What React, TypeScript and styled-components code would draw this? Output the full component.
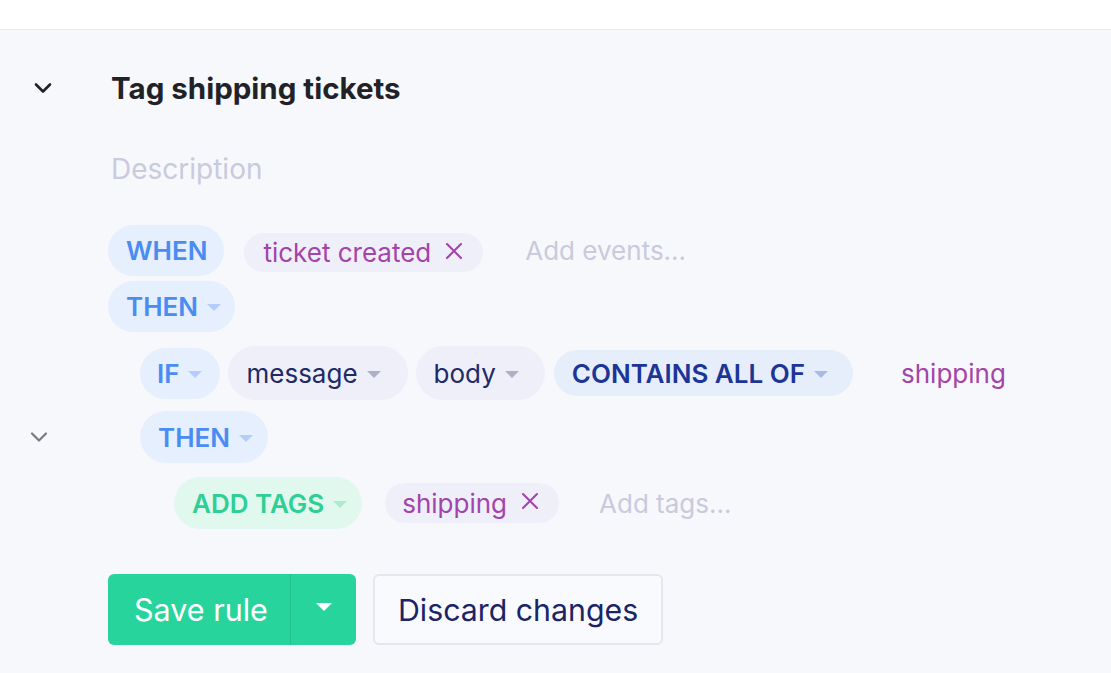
import React from "react";
import styled, { createGlobalStyle } from "styled-components";

const Global = createGlobalStyle`
  html, body { margin: 0; padding: 0; background: #f7f8fc; }
  body { font-family: Inter, "Noto Sans", sans-serif; -webkit-font-smoothing: antialiased; }
  * { box-sizing: border-box; }
`;

const TopBar = styled.div`
  height: 30px;
  background: #ffffff;
  border-bottom: 1px solid #e9eaf0;
`;

const Panel = styled.div`
  background: #f7f8fc;
  min-height: 643px;
  padding-top: 38px;
  display: flex;
  flex-direction: column;
`;

const Row = styled.div<{ $mt?: number }>`
  display: flex;
  align-items: center;
  margin-top: ${(p) => p.$mt ?? 0}px;
`;

const Gutter = styled.div<{ $w?: number }>`
  width: ${(p) => p.$w ?? 108}px;
  flex: none;
  display: flex;
  align-items: center;
`;

const ChevronBox = styled.div<{ $left: number }>`
  margin-left: ${(p) => p.$left}px;
  display: flex;
`;

const Title = styled.h1`
  margin: 0 0 0 3px;
  font-size: 29.5px;
  font-weight: 700;
  color: #1f2328;
  line-height: 40px;
`;

const Description = styled.div`
  margin-left: 3px;
  font-size: 28px;
  color: #c9cade;
  line-height: 40px;
`;

const Content = styled.div<{ $gap?: number }>`
  display: flex;
  align-items: center;
  gap: ${(p) => p.$gap ?? 8}px;
`;

type Tone = "blue" | "gray" | "navy" | "green" | "tag";

const tones: Record<Tone, { bg: string; fg: string; caret: string }> = {
  blue: { bg: "#e5effd", fg: "#4a8cf2", caret: "#b5cdf8" },
  gray: { bg: "#eeeff8", fg: "#1f2a66", caret: "#aeb0c8" },
  navy: { bg: "#e6eefb", fg: "#1c3596", caret: "#a9bbe2" },
  green: { bg: "#e1f8ef", fg: "#2fcf94", caret: "#aeeacf" },
  tag: { bg: "#efeff9", fg: "#a344aa", caret: "#a344aa" },
};

const Pill = styled.div<{ $tone: Tone; $h: number; $pl?: number; $pr?: number; $bold?: boolean; $ml?: number; $dy?: number }>`
  display: inline-flex;
  align-items: center;
  height: ${(p) => p.$h}px;
  padding: 0 ${(p) => p.$pr ?? 18}px 0 ${(p) => p.$pl ?? 18}px;
  margin-left: ${(p) => p.$ml ?? 0}px;
  margin-top: ${(p) => (p.$dy ?? 0) * 2}px;
  border-radius: ${(p) => p.$h / 2}px;
  background: ${(p) => tones[p.$tone].bg};
  color: ${(p) => tones[p.$tone].fg};
  font-size: 26px;
  font-weight: ${(p) => (p.$bold ? 600 : 400)};
  white-space: nowrap;
  flex: none;
`;

const Caret = styled.span<{ $tone: Tone }>`
  display: inline-block;
  width: 0;
  height: 0;
  margin-left: 9px;
  margin-top: 2px;
  border-left: 7px solid transparent;
  border-right: 7px solid transparent;
  border-top: 7px solid ${(p) => tones[p.$tone].caret};
`;

const RemoveBox = styled.span`
  display: inline-flex;
  margin-left: 14px;
  margin-top: -4px;
`;

const Placeholder = styled.span<{ $ml: number }>`
  margin-left: ${(p) => p.$ml}px;
  font-size: 26px;
  color: #c9cade;
  white-space: nowrap;
`;

const PlainTag = styled.span<{ $ml: number }>`
  margin-left: ${(p) => p.$ml}px;
  font-size: 26px;
  color: #a344aa;
  white-space: nowrap;
`;

const ButtonGroup = styled.div`
  display: flex;
  height: 71px;
  border-radius: 6px;
  overflow: hidden;
  background: #27d59c;
  flex: none;
`;

const SaveMain = styled.button`
  border: none;
  background: transparent;
  color: #ffffff;
  font-family: inherit;
  font-size: 30.5px;
  padding: 0 0 0 26px;
  width: 183px;
  text-align: left;
  border-right: 1px solid #22c08c;
  white-space: nowrap;
`;

const SaveCaret = styled.button`
  border: none;
  background: transparent;
  width: 65px;
  display: flex;
  align-items: center;
  justify-content: center;
  padding: 0 0 6px 0;
  &::after {
    content: "";
    border-left: 8px solid transparent;
    border-right: 8px solid transparent;
    border-top: 8px solid #ffffff;
  }
`;

const Discard = styled.button`
  height: 71px;
  margin-left: 17px;
  padding: 0 23px;
  border: 2px solid #e5e6ee;
  border-radius: 6px;
  background: #f9fafd;
  color: #1b2466;
  font-family: inherit;
  font-size: 30.3px;
  white-space: nowrap;
`;

const Chevron = ({ size, color, stroke }: { size: number; color: string; stroke: number }) => (
  <svg width={size} height={size} viewBox="0 0 24 24" fill="none">
    <path d="M5 8.5l7 7 7-7" stroke={color} strokeWidth={stroke} strokeLinecap="round" strokeLinejoin="round" />
  </svg>
);

const Remove = () => (
  <RemoveBox>
    <svg width={18} height={18} viewBox="0 0 18 18" fill="none">
      <path d="M2 2l14 14M16 2L2 16" stroke="#a344aa" strokeWidth={2.1} strokeLinecap="round" />
    </svg>
  </RemoveBox>
);

export default function App() {
  return (
    <>
      <Global />
      <TopBar />
      <Panel>
        <Row>
          <Gutter>
            <ChevronBox $left={31}>
              <Chevron size={24} color="#1f2328" stroke={2.6} />
            </ChevronBox>
          </Gutter>
          <Title>Tag shipping tickets</Title>
        </Row>
        <Row $mt={41}>
          <Gutter />
          <Description>Description</Description>
        </Row>
        <Row $mt={36}>
          <Gutter />
          <Content $gap={0}>
            <Pill $tone="blue" $h={51} $bold $pr={17}>WHEN</Pill>
            <Pill $tone="tag" $h={39} $pl={19} $pr={20} $ml={20} $dy={2}>
              ticket created<Remove />
            </Pill>
            <Placeholder $ml={42}>Add events...</Placeholder>
          </Content>
        </Row>
        <Row $mt={5}>
          <Gutter />
          <Pill $tone="blue" $h={51} $bold $pr={14}>
            THEN<Caret $tone="blue" />
          </Pill>
        </Row>
        <Row $mt={14}>
          <Gutter $w={140} />
          <Content $gap={8}>
            <Pill $tone="blue" $h={51} $bold $pl={17} $pr={18}>
              IF<Caret $tone="blue" />
            </Pill>
            <Pill $tone="gray" $h={54} $pr={27}>
              message<Caret $tone="gray" />
            </Pill>
            <Pill $tone="gray" $h={54} $pr={26}>
              body<Caret $tone="gray" />
            </Pill>
            <Pill $tone="navy" $h={46} $bold $pl={18} $pr={25} $ml={1}>
              CONTAINS ALL OF<Caret $tone="navy" />
            </Pill>
            <PlainTag $ml={40}>shipping</PlainTag>
          </Content>
        </Row>
        <Row $mt={11}>
          <Gutter $w={140}>
            <ChevronBox $left={27}>
              <Chevron size={24} color="#7a7a80" stroke={2.2} />
            </ChevronBox>
          </Gutter>
          <Pill $tone="blue" $h={52} $bold $pr={15}>
            THEN<Caret $tone="blue" />
          </Pill>
        </Row>
        <Row $mt={14}>
          <Gutter $w={174} />
          <Content $gap={0}>
            <Pill $tone="green" $h={52} $bold $pr={15}>
              ADD TAGS<Caret $tone="green" />
            </Pill>
            <Pill $tone="tag" $h={40} $pl={17} $pr={20} $ml={23}>
              shipping<Remove />
            </Pill>
            <Placeholder $ml={40}>Add tags...</Placeholder>
          </Content>
        </Row>
        <Row $mt={45}>
          <Gutter />
          <ButtonGroup>
            <SaveMain>Save rule</SaveMain>
            <SaveCaret aria-label="More" />
          </ButtonGroup>
          <Discard>Discard changes</Discard>
        </Row>
      </Panel>
    </>
  );
}
